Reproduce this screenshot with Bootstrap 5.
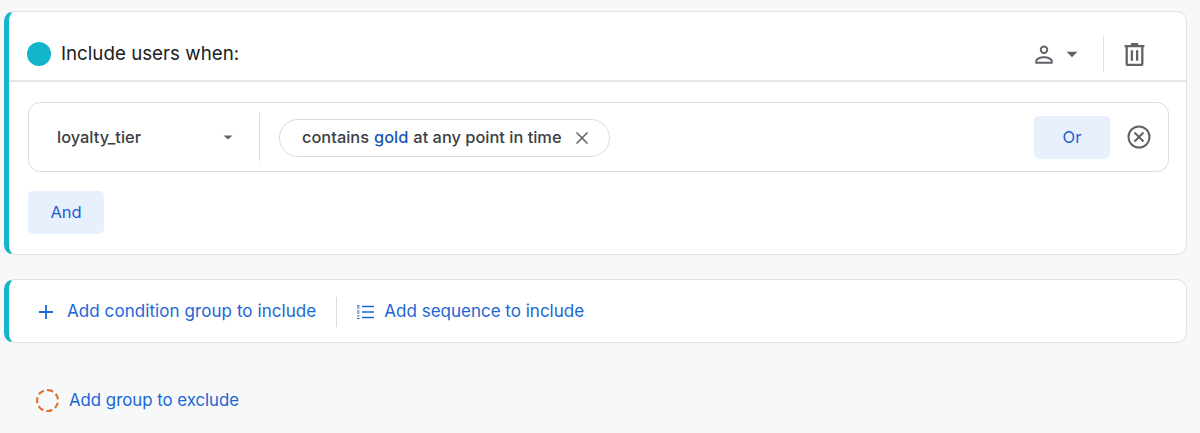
<!DOCTYPE html>
<html lang="en">

<head>
    <meta charset="UTF-8" />
    <title>Include users</title>
    <link href="https://cdn.jsdelivr.net/npm/bootstrap@5.3.3/dist/css/bootstrap.min.css" rel="stylesheet">
    <style>
        body {
            background-color: #f7f8fa;
            font-family: Inter, "Liberation Sans", sans-serif;
            height: 433px;
            overflow: hidden;
        }

        .page-wrap {
            padding: 11px 13px 0 4px;
        }

        .group-box {
            background: #fff;
            border: 1px solid #dfe1e4;
            border-left: 5px solid #12b5cb;
            border-radius: 10px;
        }

        .group-head {
            height: 70px;
            padding: 16px 39px 0 18px;
            border-bottom: 2px solid #e3e5e8;
        }

        .teal-dot {
            width: 24px;
            height: 24px;
            border-radius: 50%;
            background: #12b5cb;
            margin-right: 10px;
        }

        .group-title {
            font-size: 18.75px;
            color: #202124;
        }

        .head-sep {
            width: 1px;
            height: 36px;
            background: #dfe1e4;
            margin: 0 18px 0 20px;
        }

        .group-body {
            padding: 20px 17px 20px 19px;
        }

        .cond-box {
            height: 70px;
            border: 1px solid #dadce0;
            border-radius: 12px;
            padding: 0 17px 0 28px;
            margin-bottom: 19px;
        }

        .cond-name {
            width: 163px;
            font-size: 16.4px;
            font-weight: 500;
            color: #3c4043;
        }

        .cond-sep {
            width: 1px;
            height: 48px;
            background: #dadce0;
            margin: 0 19px 0 23px;
        }

        .cond-pill {
            height: 38px;
            margin-top: 1px;
            border: 1px solid #dadce0;
            border-radius: 19px;
            padding: 0 21px 0 22px;
            font-size: 16.4px;
            font-weight: 500;
            color: #3c4043;
        }

        .cond-value {
            color: #1a56b8;
            margin: 0 5px;
        }

        .pill-close {
            margin-left: 14px;
        }

        .soft-btn {
            width: 76px;
            height: 43px;
            padding: 0;
            border: 0;
            border-radius: 5px;
            background: #e8f0fe;
            color: #1a5fd0;
            font-size: 16.5px;
        }

        .or-btn {
            margin-right: 17px;
        }

        .add-row {
            height: 64px;
            padding: 1px 0 0 28px;
        }

        .add-link {
            color: #1a66d6;
            font-size: 17px;
            text-decoration: none;
        }

        .add-link-wide {
            letter-spacing: 0.07px;
        }

        .add-link-small {
            font-size: 16.8px;
        }

        .add-sep {
            width: 1px;
            height: 30px;
            background: #dadce0;
            margin: 0 19px 0 20px;
        }

        .seq-icon {
            margin-right: 10px;
        }

        .exclude-row {
            margin-top: 45px;
            padding-left: 32px;
        }

        .dash-circle {
            width: 23px;
            height: 23px;
            border: 2px dashed #e0702a;
            border-radius: 50%;
            margin-right: 10px;
        }
    </style>
</head>

<body>
    <div class="page-wrap">
        <div class="group-box mb-4">
            <div class="group-head d-flex align-items-center">
                <span class="teal-dot"></span>
                <span class="group-title">Include users when:</span>
                <svg class="ms-auto" width="26" height="26" viewBox="0 0 24 24" fill="#5f6368">
                    <path d="M12 6a2.1 2.1 0 1 1 0 4.2A2.1 2.1 0 0 1 12 6zm0 9.9c2.97 0 6.1 1.46 6.1 2.1v1.1H5.900V18c0-.64 3.130-2.100 6.100-2.100zM12 4.100a3.900 3.900 0 1 0 0 7.800 3.900 3.900 0 0 0 0-7.800zm0 9.900c-2.670 0-8 1.340-8 4v3h16v-3c0-2.660-5.330-4-8-4z" />
                </svg>
                <svg class="ms-1" width="22" height="22" viewBox="0 0 24 24" fill="#5f6368">
                    <path d="M6 9.500l6 6 6-6z" />
                </svg>
                <span class="head-sep"></span>
                <svg width="25" height="25" viewBox="0 0 24 24" fill="none" stroke="#5f6368" stroke-width="2.200">
                    <path d="M2.500 4h19M4.500 4v17a1 1 0 0 0 1 1h13a1 1 0 0 0 1-1V4M8.500 2h7M9.500 8v10M14.500 8v10" />
                </svg>
            </div>
            <div class="group-body">
                <div class="cond-box d-flex align-items-center">
                    <span class="cond-name">loyalty_tier</span>
                    <svg width="16" height="16" viewBox="0 0 16 16" fill="#5f6368">
                        <path d="M3.500 6.500h9L8 10.500z" />
                    </svg>
                    <span class="cond-sep"></span>
                    <span class="cond-pill d-flex align-items-center">
                        contains <span class="cond-value">gold</span> at any point in time
                        <svg class="pill-close" width="12" height="12" viewBox="0 0 12 12" stroke="#5f6368" stroke-width="1.500">
                            <path d="M0.500 0.500l11 11M11.500 0.500l-11 11" />
                        </svg>
                    </span>
                    <button class="soft-btn or-btn btn ms-auto">Or</button>
                    <svg width="24" height="24" viewBox="0 0 24 24" fill="none" stroke="#5f6368" stroke-width="2">
                        <circle cx="12" cy="12" r="10.500" />
                        <path d="M7.500 7.500l9 9M16.500 7.500l-9 9" />
                    </svg>
                </div>
                <button class="soft-btn btn d-block">And</button>
            </div>
        </div>

        <div class="group-box add-row d-flex align-items-center">
            <svg class="me-2" width="18" height="18" viewBox="0 0 18 18" stroke="#1a66d6" stroke-width="1.800">
                <path d="M9 2v14M2 9h14" />
            </svg>
            <a class="add-link add-link-wide ms-1" href="#">Add condition group to include</a>
            <span class="add-sep"></span>
            <svg class="seq-icon" width="18" height="18" viewBox="0 0 18 18" fill="none" stroke="#1a66d6">
                <path stroke-width="1.600" d="M6 3.500h12M6 9h12M6 14.500h12" />
                <path stroke-width="1.200" d="M1 2.800h2.500M1 5h2.500M1 8h2.500M1 10h2.500M1 13h2.500M1 15.500h2.500" />
            </svg>
            <a class="add-link" href="#">Add sequence to include</a>
        </div>

        <div class="exclude-row d-flex align-items-center">
            <span class="dash-circle"></span>
            <a class="add-link add-link-small" href="#">Add group to exclude</a>
        </div>
    </div>
</body>

</html>
